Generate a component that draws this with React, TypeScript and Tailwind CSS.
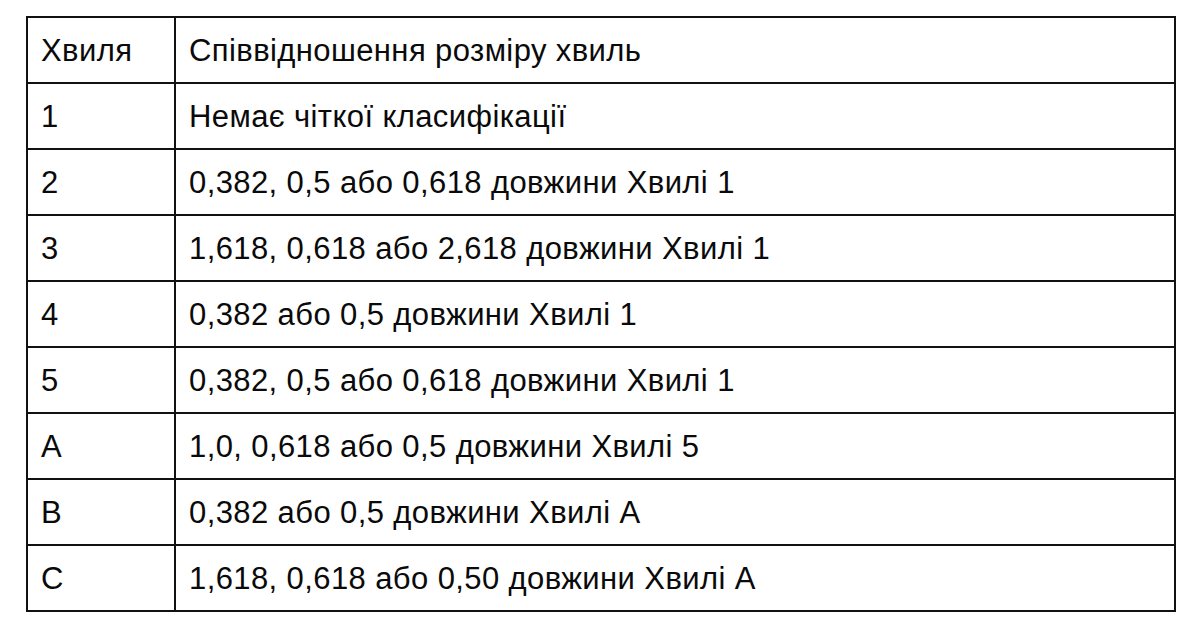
import React from "react";

const rows: [string, string][] = [
  ["1", "Немає чіткої класифікації"],
  ["2", "0,382, 0,5 або 0,618 довжини Хвилі 1"],
  ["3", "1,618, 0,618 або 2,618 довжини Хвилі 1"],
  ["4", "0,382 або 0,5 довжини Хвилі 1"],
  ["5", "0,382, 0,5 або 0,618 довжини Хвилі 1"],
  ["A", "1,0, 0,618 або 0,5 довжини Хвилі 5"],
  ["B", "0,382 або 0,5 довжини Хвилі A"],
  ["C", "1,618, 0,618 або 0,50 довжини Хвилі A"],
];

export default function App() {
  return (
    <div
      className="w-[1200px] h-[632px] bg-white pt-[16px] pl-[26px]"
      style={{ fontFamily: '"Liberation Sans", Arial, sans-serif' }}
    >
      <table className="border-collapse text-[31px] tracking-[0.4px] text-[#0a0a0a] w-[1150px] table-fixed">
        <colgroup>
          <col className="w-[148px]" />
          <col />
        </colgroup>
        <tbody>
          <tr className="h-[66px]">
            <td className="border-2 border-[#111] pl-[13px] pt-[3px]">Хвиля</td>
            <td className="border-2 border-[#111] pl-[13px] pt-[3px]">Співвідношення розміру хвиль</td>
          </tr>
          {rows.map(([w, r]) => (
            <tr key={w} className="h-[66px]">
              <td className="border-2 border-[#111] pl-[13px] pt-[2px]">{w}</td>
              <td className="border-2 border-[#111] pl-[13px] pt-[2px]">{r}</td>
            </tr>
          ))}
        </tbody>
      </table>
    </div>
  );
}
